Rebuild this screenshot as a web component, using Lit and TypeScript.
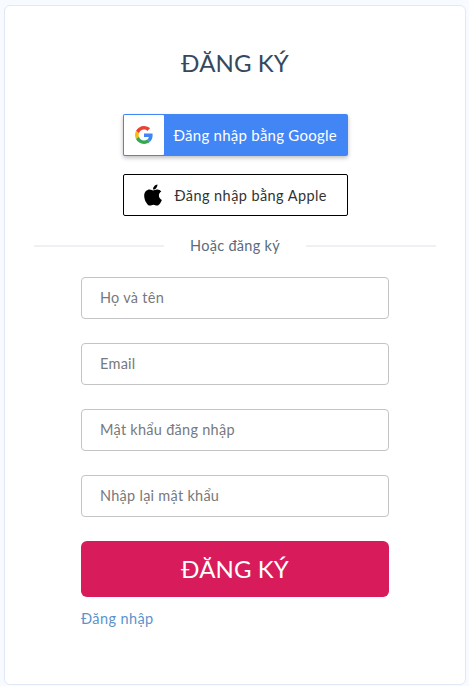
import { LitElement, html, css } from "lit";
import { customElement } from "lit/decorators.js";

@customElement("app-root")
export class AppRoot extends LitElement {
  static styles = css`
    :host { display: block; width: 469px; height: 686px; background: #f7faff; box-sizing: border-box; padding: 5px 3px 1px 4px; font-family: Lato, "Noto Sans", sans-serif; }
    .card { box-sizing: border-box; height: 680px; background: #fff; border: 1px solid #e1e9f6; border-radius: 6px; display: flex; flex-direction: column; align-items: center; padding-top: 40px; }
    h1 { margin: 0; font-size: 24px; line-height: 34px; font-weight: 400; color: #34495e; letter-spacing: 0.1px; }
    .social { box-sizing: border-box; width: 225px; height: 42px; border-radius: 2px; display: flex; align-items: center; font-size: 15px; letter-spacing: 0.25px; }
    .google { margin-top: 34px; background: #4285f4; color: #fff; padding: 1px; box-shadow: 0 2px 4px rgba(0,0,0,.25); }
    .gicon { width: 40px; height: 40px; background: #fff; border-radius: 1px; display: flex; align-items: center; justify-content: center; margin-right: 10px; }
    .apple { margin-top: 18px; background: #fff; color: #333; border: 1px solid #000; padding-left: 20px; gap: 13px; font-size: 14.5px; letter-spacing: 0.42px; }
    .divider { margin-top: 20px; display: flex; align-items: center; justify-content: space-between; width: 402px; height: 20px; }
    .divider i { display: block; width: 130px; height: 2px; background: #eef0f3; }
    .divider span { font-size: 14.5px; color: #5b6b7c; letter-spacing: 0.3px; padding-bottom: 1px; }
    .form { width: 308px; display: flex; flex-direction: column; gap: 24px; margin-top: 21px; }
    .field { box-sizing: border-box; height: 42px; border: 1px solid #c4c4c4; border-radius: 4px; padding: 0 18px 1px; display: flex; align-items: center; font-size: 14.5px; color: #76797d; letter-spacing: 0.27px; }
    .submit { box-sizing: border-box; width: 308px; height: 56px; margin-top: 24px; background: #d81b5a; color: #fff; border-radius: 6px; padding-bottom: 1px; display: flex; align-items: center; justify-content: center; font-size: 24px; letter-spacing: 0.1px; }
    .link { width: 308px; margin-top: 12px; font-size: 14.5px; line-height: 20px; color: #5b93cd; letter-spacing: 0.4px; }
  `;
  render() {
    return html`<div class="card">
      <h1>ĐĂNG KÝ</h1>
      <div class="social google">
        <div class="gicon">
          <svg width="18" height="18" viewBox="0 0 48 48">
            <path fill="#EA4335" d="M24 9.5c3.54 0 6.71 1.22 9.21 3.6l6.85-6.85C35.9 2.38 30.47 0 24 0 14.62 0 6.51 5.38 2.56 13.22l7.98 6.19C12.43 13.72 17.74 9.5 24 9.5z"/>
            <path fill="#4285F4" d="M46.98 24.55c0-1.57-.15-3.09-.38-4.55H24v9.02h12.94c-.58 2.96-2.26 5.48-4.78 7.18l7.73 6c4.51-4.18 7.09-10.36 7.09-17.65z"/>
            <path fill="#FBBC05" d="M10.53 28.59c-.48-1.45-.76-2.99-.76-4.59s.27-3.14.76-4.59l-7.98-6.19C.92 16.46 0 20.12 0 24c0 3.88.92 7.54 2.56 10.78l7.97-6.19z"/>
            <path fill="#34A853" d="M24 48c6.48 0 11.93-2.13 15.89-5.81l-7.73-6c-2.15 1.45-4.92 2.3-8.16 2.3-6.26 0-11.57-4.22-13.47-9.91l-7.98 6.19C6.51 42.62 14.62 48 24 48z"/>
          </svg>
        </div>
        <span>Đăng nhập bằng Google</span>
      </div>
      <div class="social apple">
        <svg width="18" height="24" viewBox="0 0 384 512"><path fill="#000" d="M318.7 268.7c-.2-36.7 16.4-64.4 50-84.8-18.8-26.9-47.2-41.7-84.7-44.6-35.5-2.8-74.3 20.7-88.5 20.7-15 0-49.4-19.7-76.4-19.7C63.3 141.2 4 184.8 4 273.5q0 39.3 14.4 81.2c12.8 36.7 59 126.7 107.2 125.2 25.2-.6 43-17.9 75.8-17.9 31.8 0 48.3 17.9 76.4 17.9 48.6-.7 90.4-82.5 102.6-119.3-65.2-30.7-61.7-90-61.7-91.9zm-56.6-164.2c27.3-32.4 24.8-61.9 24-72.5-24.1 1.4-52 16.4-67.9 34.9-17.5 19.8-27.8 44.3-25.6 71.9 26.1 2 49.9-11.4 69.5-34.3z"/></svg>
        <span>Đăng nhập bằng Apple</span>
      </div>
      <div class="divider"><i></i><span>Hoặc đăng ký</span><i></i></div>
      <div class="form">
        <div class="field">Họ và tên</div>
        <div class="field">Email</div>
        <div class="field">Mật khẩu đăng nhập</div>
        <div class="field">Nhập lại mật khẩu</div>
      </div>
      <div class="submit">ĐĂNG KÝ</div>
      <div class="link">Đăng nhập</div>
    </div>`;
  }
}
